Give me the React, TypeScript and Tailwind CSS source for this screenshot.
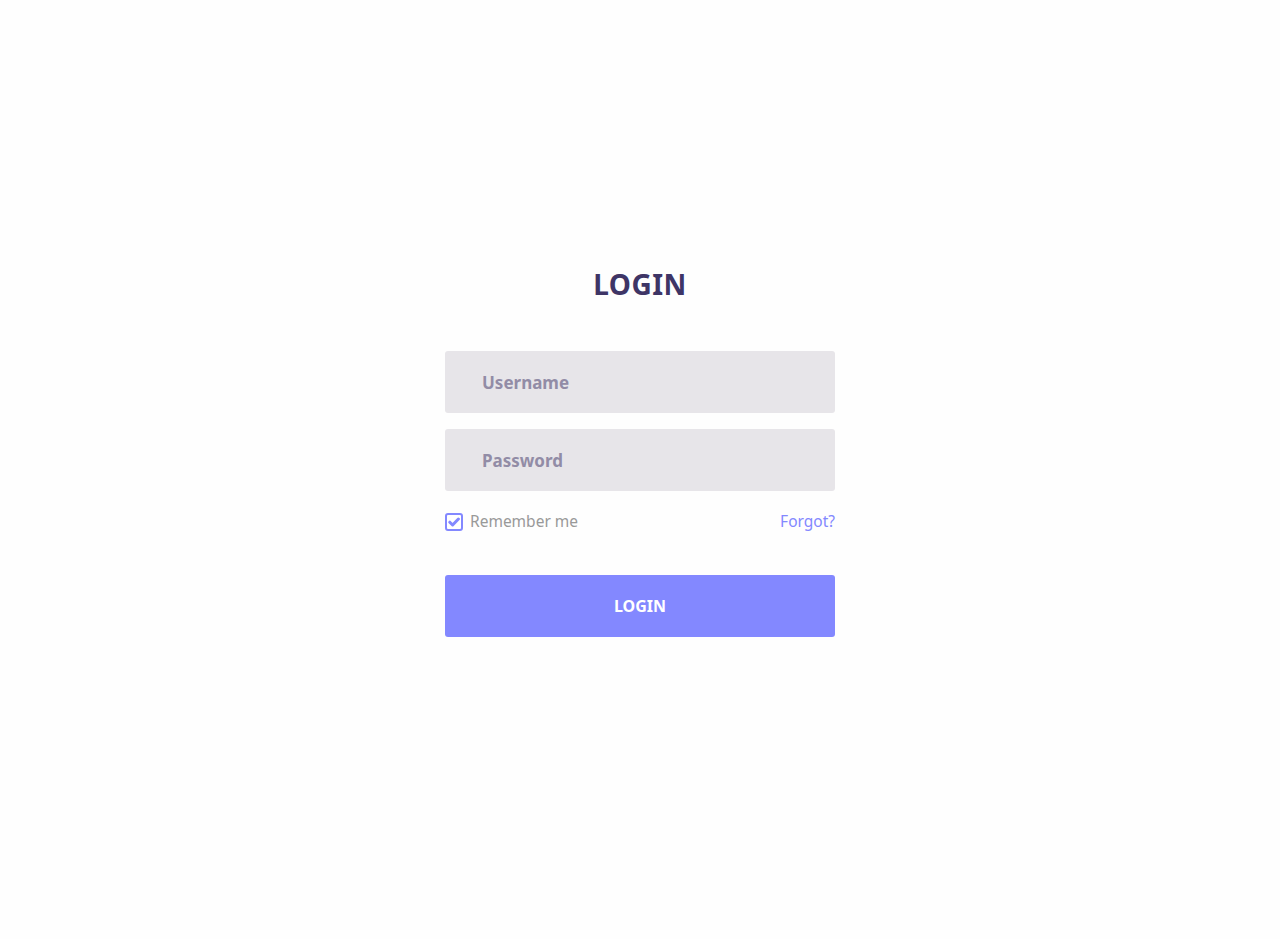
import { useState } from "react";

export default function App() {
  const [remember, setRemember] = useState(true);

  return (
    <div
      className="min-h-screen w-full bg-[#fefefe] flex flex-col items-center pt-[264px]"
      style={{ fontFamily: '"Noto Sans", "Open Sans", sans-serif' }}
    >
      <h1 className="text-[28px] leading-[40px] font-bold text-[#3e3566] tracking-[0.5px]">LOGIN</h1>

      <form className="mt-[47px] w-[390px] flex flex-col" onSubmit={(e) => e.preventDefault()}>
        <input
          type="text"
          placeholder="Username"
          className="h-[62px] w-full rounded-[3px] bg-[#e7e5e9] pl-[37px] text-[17px] font-bold text-[#3e3566] placeholder:text-[#928ca6] outline-none"
        />
        <input
          type="password"
          placeholder="Password"
          className="mt-[16px] h-[62px] w-full rounded-[3px] bg-[#e7e5e9] pl-[37px] text-[17px] font-bold text-[#3e3566] placeholder:text-[#928ca6] outline-none"
        />

        <div className="mt-[21px] flex items-center justify-between h-[20px]">
          <label className="flex items-center gap-[7px] cursor-pointer text-[15.5px] text-[#999999]">
            <span
              onClick={() => setRemember(!remember)}
              className="flex h-[18px] w-[18px] items-center justify-center rounded-[3px] border-2 border-[#8388ff] bg-white"
            >
              {remember && (
                <svg viewBox="0 0 12 12" className="h-[12px] w-[12px]" fill="none">
                  <path d="M1.8 6.2 L4.6 9 L10.4 3" stroke="#8388ff" strokeWidth="3" strokeLinecap="round" strokeLinejoin="round" />
                </svg>
              )}
            </span>
            Remember me
          </label>
          <a href="#" className="text-[15.5px] text-[#8388ff]">Forgot?</a>
        </div>

        <button
          type="submit"
          className="mt-[43px] h-[62px] w-full rounded-[3px] bg-[#8388ff] text-[16px] font-bold text-white"
        >
          LOGIN
        </button>
      </form>
    </div>
  );
}
